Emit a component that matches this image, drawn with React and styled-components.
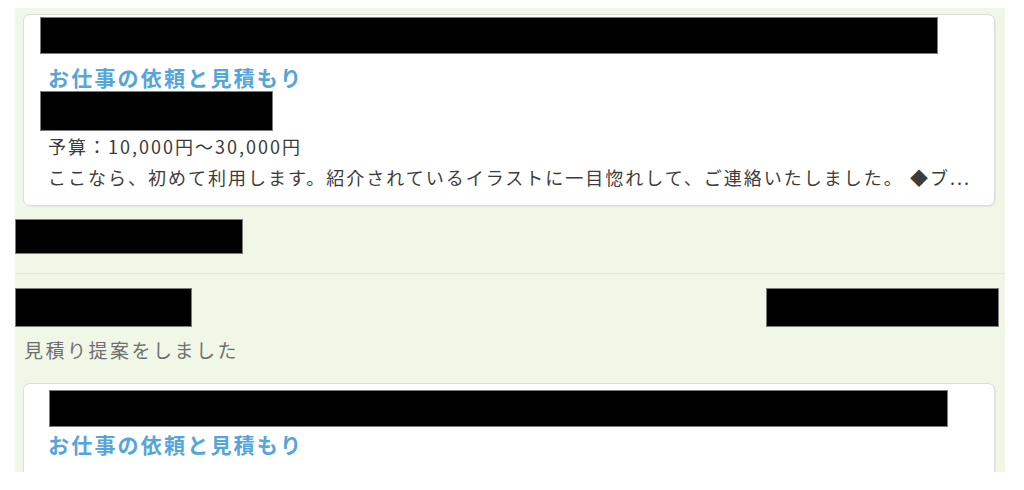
import React from "react";
import styled, { createGlobalStyle } from "styled-components";

const Global = createGlobalStyle`
  html, body { margin: 0; padding: 0; background: #ffffff; }
  body { font-family: "Noto Sans CJK JP", "Noto Sans", sans-serif; }
`;

const Page = styled.div`
  width: 1024px;
  height: 490px;
  padding: 8px 19px 0 15px;
  box-sizing: border-box;
  overflow: hidden;
`;

const Panel = styled.div`
  height: 464px;
  background: #f1f7e7;
  padding-top: 6px;
  box-sizing: border-box;
  overflow: hidden;
  display: flex;
  flex-direction: column;
`;

const Card = styled.div`
  margin: ${(p) => p.$mt || 0}px 10px 0 8px;
  background: #ffffff;
  border: 1px solid #dcdcdc;
  border-radius: 7px;
  box-shadow: 1px 1px 0 rgba(0, 0, 0, 0.05);
  padding: ${(p) => p.$pt || 2}px 16px ${(p) => p.$pb || 12}px ${(p) => p.$pl || 16}px;
  display: flex;
  flex-direction: column;
  flex-shrink: 0;
`;

const Redact = styled.span`
  display: block;
  background: #000000;
  border: 1px solid #7c7c7c;
  box-sizing: border-box;
  width: ${(p) => p.$w}px;
  height: ${(p) => p.$h}px;
  margin-left: ${(p) => p.$ml || 0}px;
  flex-shrink: 0;
`;

const Title = styled.div`
  margin-top: ${(p) => p.$mt || 0}px;
  margin-left: ${(p) => p.$ml || 8}px;
  font-size: 21px;
  font-weight: 700;
  letter-spacing: 2.2px;
  line-height: 27px;
  color: #54a5dc;
`;

const Line = styled.div`
  margin-left: 8px;
  font-size: 18px;
  letter-spacing: 2px;
  line-height: 31px;
  color: #3c3c3c;
  white-space: nowrap;
`;

const MetaRow = styled.div`
  display: flex;
  justify-content: space-between;
  align-items: center;
  padding: 0 6px 0 0;
  margin-top: ${(p) => p.$mt || 0}px;
`;

const Divider = styled.div`
  height: 1px;
  background: #e2e9d9;
  margin-top: 19px;
  flex-shrink: 0;
`;

const Message = styled.div`
  margin-top: 7px;
  padding-left: 9px;
  font-size: 19px;
  letter-spacing: 2.5px;
  line-height: 32px;
  color: #6f6f6f;
`;

export default function App() {
  return (
    <>
      <Global />
      <Page>
        <Panel>
          <Card $pt={2} $pl={16}>
            <Redact $w={898} $h={37} />
            <Title $mt={10}>お仕事の依頼と見積もり</Title>
            <Redact $w={233} $h={40} />
            <Line>予算：10,000円〜30,000円</Line>
            <Line>ここなら、初めて利用します。紹介されているイラストに一目惚れして、ご連絡いたしました。 ◆ブ...</Line>
          </Card>
          <MetaRow $mt={13}>
            <Redact $w={228} $h={35} />
          </MetaRow>
          <Divider />
          <MetaRow $mt={14}>
            <Redact $w={177} $h={39} />
            <Redact $w={233} $h={39} />
          </MetaRow>
          <Message>見積り提案をしました</Message>
          <Card $mt={17} $pt={6} $pl={25} $pb={60}>
            <Redact $w={899} $h={37} />
            <Title $mt={4} $ml={-1}>お仕事の依頼と見積もり</Title>
          </Card>
        </Panel>
      </Page>
    </>
  );
}
